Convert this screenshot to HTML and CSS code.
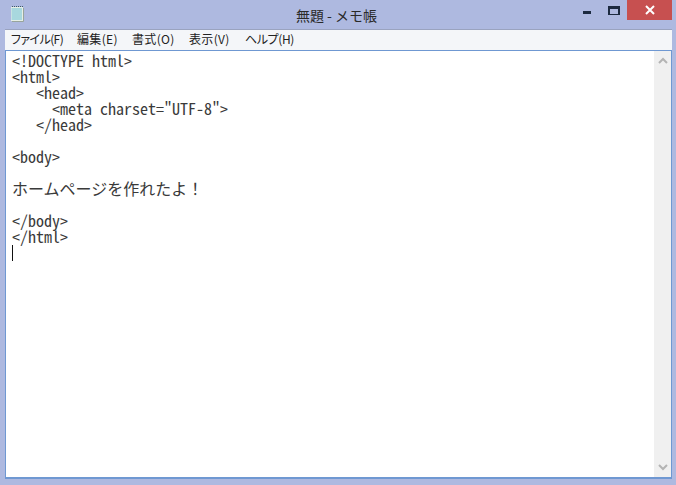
FILE: index.html
```html
<!DOCTYPE html>
<html lang="ja">
<head>
<meta charset="UTF-8">
<title>無題 - メモ帳</title>
<link rel="stylesheet" href="styles.css">
</head>
<body>
<div class="window">
  <header class="titlebar">
    <svg class="app-icon" width="15" height="17" viewBox="0 0 15 17">
      <rect x="1" y="2" width="12" height="14" fill="#e6efe6"/>
      <rect x="1.5" y="3" width="10.5" height="12" fill="#a8d8de"/>
      <path d="M2 1.500h1M4 1.500h1M6 1.500h1M8 1.500h1M10 1.500h1M12 1.500h1" stroke="#3f5a66"/>
      <path d="M13.500 3v13.500H2" fill="none" stroke="#98a49c"/>
    </svg>
    <div class="title">無題 - メモ帳</div>
    <div class="controls">
      <div class="ctl"><span class="min"></span></div>
      <div class="ctl"><span class="max"></span></div>
      <div class="close">
        <svg width="10" height="10" viewBox="0 0 10 10"><path d="M1 1l8 8M9 1l-8 8" stroke="#fff" stroke-width="2"/></svg>
      </div>
    </div>
  </header>
  <nav class="menu">
    <span class="item i1">ファイル(F)</span>
    <span class="item i2">編集(E)</span>
    <span class="item i3">書式(O)</span>
    <span class="item i4">表示(V)</span>
    <span class="item i5">ヘルプ(H)</span>
  </nav>
  <main class="client">
    <div class="editor"><div class="line">&lt;!DOCTYPE html&gt;</div><div class="line">&lt;html&gt;</div><div class="line">   &lt;head&gt;</div><div class="line">     &lt;meta charset="UTF-8"&gt;</div><div class="line">   &lt;/head&gt;</div><div class="line"> </div><div class="line">&lt;body&gt;</div><div class="line"> </div><div class="line jp">ホームページを作れたよ！</div><div class="line"> </div><div class="line">&lt;/body&gt;</div><div class="line">&lt;/html&gt;</div><div class="line"><span class="caret"></span></div></div>
    <aside class="scrollbar">
      <svg width="10" height="7" viewBox="0 0 10 7"><path d="M1 6l4-4 4 4" fill="none" stroke="#b4b4b4" stroke-width="2"/></svg>
      <svg width="10" height="7" viewBox="0 0 10 7"><path d="M1 1l4 4 4-4" fill="none" stroke="#b4b4b4" stroke-width="2"/></svg>
    </aside>
  </main>
</div>
</body>
</html>
```
FILE: styles.css
```css
html, body {
  margin: 0;
  height: 100%;
}
body {
  background: #aeb9e0;
  overflow: hidden;
}
.window {
  width: 676px;
  height: 485px;
  display: flex;
  flex-direction: column;
  box-sizing: border-box;
  padding: 0 4px 6px 5px;
}
.titlebar {
  height: 29px;
  flex: none;
  display: flex;
  position: relative;
}
.app-icon {
  margin: 5px 0 0 5px;
}
.title {
  position: absolute;
  left: 0;
  right: 0;
  top: 6px;
  text-align: center;
  font: 14px/18px "Noto Sans CJK JP", sans-serif;
  color: #2a2a2a;
  padding-right: 4px;
}
.controls {
  margin-left: auto;
  display: flex;
  height: 20px;
}
.ctl {
  width: 27px;
  display: flex;
  justify-content: center;
}
.min {
  width: 8px;
  height: 3px;
  background: #1c2a40;
  margin-top: 11px;
}
.max {
  width: 8px;
  height: 5px;
  border: 2px solid #1c2a40;
  border-top-width: 3px;
  border-bottom-width: 1px;
  margin-top: 6px;
}
.close {
  width: 45px;
  height: 20px;
  background: #c75050;
  display: flex;
  align-items: center;
  justify-content: center;
}
.menu {
  height: 21px;
  flex: none;
  box-sizing: border-box;
  background: #f4f6f9;
  border-top: 1px solid #9aa3bf;
  padding: 0 0 0 6px;
  display: flex;
  font: 12px/17px "Noto Sans CJK JP", sans-serif;
  font-feature-settings: "palt";
  color: #222;
  white-space: nowrap;
}
.item {
  flex: none;
  letter-spacing: 0.35px;
}
.i1 { width: 66px; letter-spacing: -0.6px; }
.i2 { width: 55px; }
.i3 { width: 57px; }
.i4 { width: 56px; }
.i5 { letter-spacing: -0.4px; }
.client {
  flex: 1;
  display: flex;
  background: #fff;
  border: 1px solid #6f98d2;
  border-width: 1px 1px 2px 1px;
  min-height: 0;
}
.editor {
  flex: 1;
  padding: 1px 0 0 6px;
  font: 16px/16px "Noto Sans CJK JP", sans-serif;
  font-feature-settings: "hwid";
  color: #3a3a3a;
  white-space: pre;
}
.line {
  height: 16px;
}
.jp {
  font-feature-settings: normal;
}
.caret {
  display: block;
  width: 1px;
  height: 16px;
  margin-top: 1px;
  background: #111;
}
.scrollbar {
  width: 17px;
  flex: none;
  background: #f0f0f0;
  display: flex;
  flex-direction: column;
  justify-content: space-between;
  align-items: center;
  padding: 6px 0;
  box-sizing: border-box;
}
```
